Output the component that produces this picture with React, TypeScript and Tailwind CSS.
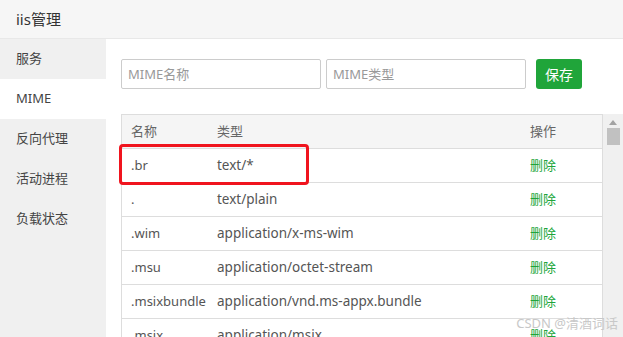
const menu = ["服务", "MIME", "反向代理", "活动进程", "负载状态"];

const rows = [
  { name: ".br", type: "text/*" },
  { name: ".", type: "text/plain" },
  { name: ".wim", type: "application/x-ms-wim" },
  { name: ".msu", type: "application/octet-stream" },
  { name: ".msixbundle", type: "application/vnd.ms-appx.bundle" },
  { name: ".msix", type: "application/msix" },
];

const font = { fontFamily: '"Noto Sans", "Noto Sans CJK SC", sans-serif' };

export default function App() {
  return (
    <div className="relative flex h-[337px] w-[623px] flex-col overflow-hidden bg-white text-[#555]" style={font}>
      <div className="flex h-[39px] shrink-0 items-center border-b border-[#e8e8e8] bg-[#f6f6f6] pl-[16px] text-[15px] text-[#333]">
        iis管理
      </div>
      <div className="flex min-h-0 flex-1">
        <aside className="w-[106px] shrink-0 bg-[#f0f0f0]">
          {menu.map((m) => (
            <div
              key={m}
              className={`flex h-[40px] items-center pl-[16px] text-[13px] text-[#444] ${m === "MIME" ? "bg-white" : ""}`}
            >
              {m}
            </div>
          ))}
        </aside>
        <main className="flex-1 pl-[15px] pt-[20px]">
          <div className="flex items-center">
            <input
              placeholder="MIME名称"
              className="h-[30px] w-[200px] rounded-[2px] border border-[#ccc] px-[6px] text-[13px] placeholder:text-[#999] outline-none"
            />
            <input
              placeholder="MIME类型"
              className="ml-[5px] h-[30px] w-[200px] rounded-[2px] border border-[#ccc] px-[6px] text-[13px] placeholder:text-[#999] outline-none"
            />
            <button className="ml-[10px] h-[30px] w-[46px] rounded-[3px] bg-[#20a53a] text-[14px] text-white">保存</button>
          </div>
          <div className="mt-[25px] flex">
            <div className="relative w-[482px] border-l border-r border-t border-[#ddd]">
              <div className="flex h-[34px] items-center border-b border-[#ddd] bg-[#f5f5f5] text-[13px] text-[#666]">
                <div className="w-[95px] pl-[9px]">名称</div>
                <div className="flex-1">类型</div>
                <div className="w-[72px]">操作</div>
              </div>
              {rows.map((r) => (
                <div key={r.name} className="flex h-[34px] items-center border-b border-[#ddd] text-[13px] text-[#555]">
                  <div className="w-[95px] pl-[9px]">{r.name}</div>
                  <div className="flex-1 text-[13.5px]">{r.type}</div>
                  <div className="w-[72px] text-[#20a53a]">删除</div>
                </div>
              ))}
              <div className="absolute left-[-3px] top-[29px] h-[41px] w-[190px] rounded-[4px] border-[3px] border-[#f0141e]" />
            </div>
            <div className="flex w-[20px] flex-col items-center bg-[#f0f0f0] pt-[6px]">
              <svg width="8" height="5" viewBox="0 0 8 5">
                <path d="M0 5 L4 0 L8 5 Z" fill="#a3a3a3" />
              </svg>
              <div className="mt-[3px] h-[17px] w-[13px] bg-[#c1c1c1]" />
            </div>
          </div>
        </main>
      </div>
      <div className="absolute bottom-[4px] right-[5px] text-[13px] text-[#c8c8c8]">CSDN @清酒词话</div>
    </div>
  );
}
